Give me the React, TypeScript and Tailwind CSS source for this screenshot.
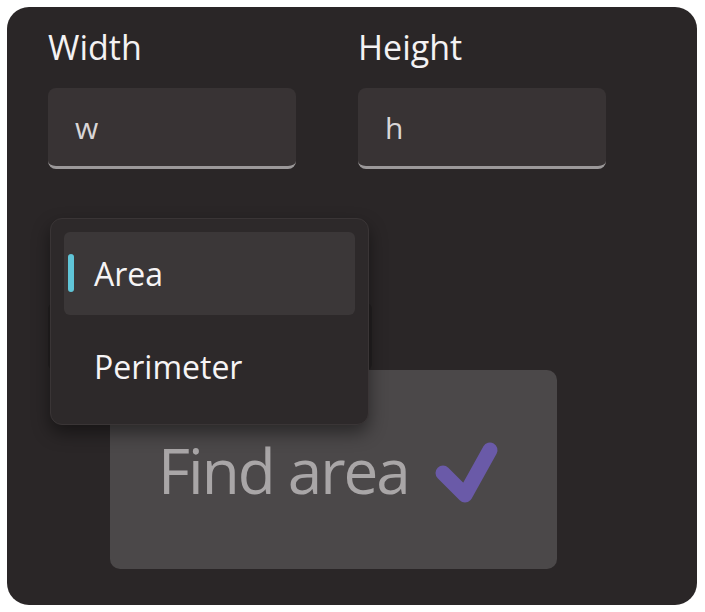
import React from "react";

const font = { fontFamily: '"Open Sans", "Noto Sans", sans-serif' };

function Field({ label, value }: { label: string; value: string }) {
  return (
    <div className="flex w-[248px] flex-col">
      <div className="h-[40px] text-[34px] leading-[40px] text-[#f4f2f3]">{label}</div>
      <div className="mt-[21px] flex h-[81px] items-center rounded-[8px] border-b-[3px] border-[#9c999a] bg-[#383334] pl-[27px] text-[30px] text-[#d9d6d7]">
        {value}
      </div>
    </div>
  );
}

export default function App() {
  return (
    <div className="bg-white pb-[7px] pl-[7px] pr-[8px] pt-[7px]" style={font}>
      <div className="flex h-[598px] flex-col rounded-[22px] bg-[#2a2627] pl-[41px] pt-[20px]">
        <div className="flex gap-[62px]">
          <Field label="Width" value="w" />
          <Field label="Height" value="h" />
        </div>

        <div className="relative h-[201px]">
          {/* closed combo box, mostly hidden under its open list */}
          <div className="mt-[134px] h-[67px] w-[324px] rounded-[6px] bg-[#232021]" />

          <div className="absolute left-[2px] top-[49px] z-10 flex h-[207px] w-[319px] flex-col overflow-hidden rounded-[12px] border border-[#3a3536] bg-[#2d292a] px-[13px] pt-[13px] shadow-[0_8px_18px_rgba(0,0,0,0.45)]">
            <div className="relative flex h-[83px] shrink-0 items-center rounded-[6px] bg-[#3b3738] pl-[30px] text-[32px] text-[#f6f4f5]">
              <span className="absolute left-[4px] top-[22px] h-[38px] w-[6px] rounded-full bg-[#60c5d8]" />
              Area
            </div>
            <div className="flex h-[104px] shrink-0 items-center pl-[30px] text-[32px] text-[#f6f4f5]">Perimeter</div>
          </div>
        </div>

        <button className="ml-[62px] flex h-[199px] w-[447px] items-center rounded-[10px] bg-[#4b4849] pl-[48px] text-left">
          <span className="text-[62px] leading-none tracking-[-2px] text-[#a9a6a7]">Find area</span>
          <svg width="70" height="70" viewBox="0 0 70 70" className="ml-[22px] mt-[8px]">
            <path
              d="M12 34 L34 56 L59 11"
              fill="none"
              stroke="#6a5aa8"
              strokeWidth="15"
              strokeLinecap="round"
              strokeLinejoin="round"
            />
          </svg>
        </button>
      </div>
    </div>
  );
}
